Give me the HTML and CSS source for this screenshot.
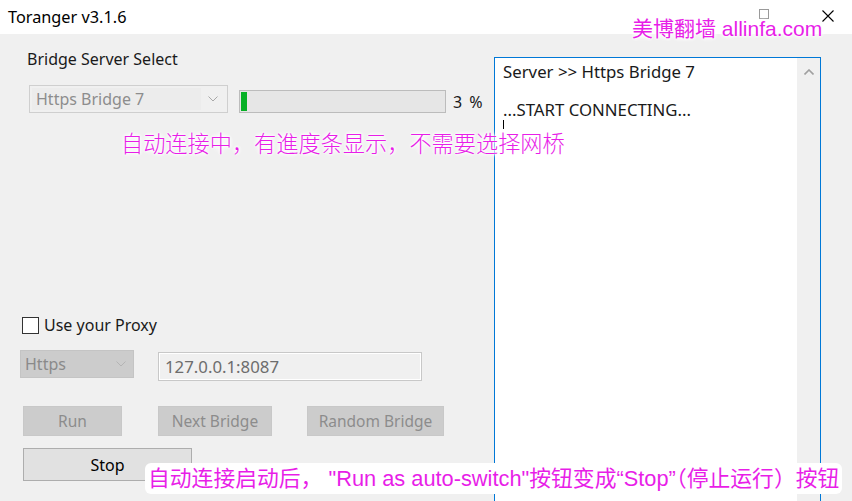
FILE: index.html
```html
<!DOCTYPE html>
<html>
<head>
<meta charset="utf-8">
<link rel="stylesheet" href="styles.css">
</head>
<body>
<div class="window">
  <div class="titlebar">
    <span class="title">Toranger v3.1.6</span>
    <span class="tb-spacer"></span>
    <span class="tb-max"></span>
    <svg class="tb-close" width="12" height="12" viewBox="0 0 12 12"><path d="M0.5 0.5 L11.5 11.5 M11.5 0.5 L0.5 11.5" stroke="#000" stroke-width="1.1"/></svg>
  </div>
  <div class="main">
    <div class="left">
      <div class="label">Bridge Server Select</div>
      <div class="row1">
        <div class="combo">
          <span class="combo-text">Https Bridge 7</span>
          <span class="combo-btn"><svg width="10" height="6" viewBox="0 0 10 6"><path d="M0.5 0.5 L5 5 L9.5 0.5" fill="none" stroke="#a8a8a8" stroke-width="1"/></svg></span>
        </div>
        <div class="progress"><div class="progress-fill" style="width:6px"></div></div>
        <span class="pct">3 %</span>
      </div>
      <div class="check-row">
        <span class="checkbox"></span>
        <span class="check-label">Use your Proxy</span>
      </div>
      <div class="proxy-row">
        <div class="combo2">
          <span class="combo2-text">Https</span>
          <svg width="10" height="6" viewBox="0 0 10 6"><path d="M0.5 0.5 L5 5 L9.5 0.5" fill="none" stroke="#b4b4b4" stroke-width="1"/></svg>
        </div>
        <div class="input">127.0.0.1:8087</div>
      </div>
      <div class="btn-row">
        <div class="btn dis btn-run">Run</div>
        <div class="btn dis btn-next">Next Bridge</div>
        <div class="btn dis btn-rand">Random Bridge</div>
      </div>
      <div class="btn btn-stop">Stop</div>
    </div>
    <div class="log">
      <div class="log-text">
        <div class="log-line">Server &gt;&gt; Https Bridge 7</div>
        <div class="log-line">&nbsp;</div>
        <div class="log-line">...START CONNECTING...</div>
        <div class="caret"></div>
      </div>
      <div class="scrollbar">
        <svg width="10" height="6" viewBox="0 0 10 6"><path d="M0.5 5.5 L5 1 L9.5 5.5" fill="none" stroke="#a0a0a0" stroke-width="1.6"/></svg>
      </div>
    </div>
  </div>
  <div class="note note-wm">美博翻墙 allinfa.com</div>
  <div class="note note-mid">自动连接中，有進度条显示，不需要选择网桥</div>
  <div class="note note-bottom">自动连接启动后，&nbsp;"Run as auto-switch"按钮变成“Stop”（停止运行）按钮</div>
</div>
</body>
</html>
```

FILE: styles.css
```css
* { box-sizing: border-box; }
html, body { margin: 0; padding: 0; }
body {
  width: 852px;
  height: 501px;
  overflow: hidden;
  background: #f0f0f0;
  font-family: "Noto Sans", "Open Sans", sans-serif;
  color: #1a1a1a;
}
.window { position: relative; width: 852px; height: 501px; }
.titlebar {
  height: 34px;
  background: #fff;
  display: flex;
  align-items: center;
  padding-left: 8px;
}
.title { font-size: 16.3px; color: #000; }
.tb-spacer { flex: 1; }
.tb-max {
  width: 10px; height: 10px;
  border: 1px solid #9a9a9a;
  margin-right: 53px;
  margin-top: -6px;
}
.tb-close { margin-right: 18px; margin-top: -2px; }

.main { display: flex; height: 467px; }
.left { width: 494px; display: flex; flex-direction: column; }
.label { font-size: 16px; margin: 15px 0 0 27px; line-height: 20px; height: 20px; }
.row1 { display: flex; align-items: flex-end; margin: 16px 0 0 29px; height: 28px; }
.combo {
  width: 199px; height: 28px;
  border: 1px solid #cfcfcf;
  background: #f0f0f0;
  display: flex; align-items: center;
  padding: 2px;
}
.combo-text {
  flex: 1; height: 22px; background: #ececec;
  color: #8d8d8d; font-size: 16px; line-height: 22px; padding-left: 4px;
}
.combo-btn { width: 24px; display: flex; justify-content: center; }
.progress {
  width: 207px; height: 23px; margin-left: 11px;
  border: 1px solid #bcbcbc; background: #e6e6e6;
  padding: 1px;
}
.progress-fill { height: 100%; background: #06b025; }
.pct { font-size: 16px; margin-left: 7px; line-height: 22px; word-spacing: 3px; }

.check-row { display: flex; align-items: center; margin: 204px 0 0 22px; height: 17px; }
.checkbox { width: 17px; height: 17px; border: 1px solid #333; background: #fff; }
.check-label { font-size: 16px; margin-left: 5px; line-height: 17px; }

.proxy-row { display: flex; align-items: flex-start; margin: 16px 0 0 20px; height: 31px; }
.combo2 {
  width: 114px; height: 28px; background: #cccccc;
  border: 1px solid #c4c4c4;
  display: flex; align-items: center; justify-content: space-between;
  padding: 0 7px 0 4px;
}
.combo2-text { color: #8a8a8a; font-size: 16px; }
.input {
  width: 264px; height: 29px; margin: 2px 0 0 24px;
  border: 1px solid #c8c8c8; background: #f0f0f0;
  box-shadow: inset 0 0 0 1px #fff;
  font-size: 16.8px; line-height: 27px; padding-left: 6px; color: #6d6d6d;
}

.btn-row { display: flex; margin: 25px 0 0 23px; height: 30px; }
.btn {
  height: 30px; display: flex; align-items: center; justify-content: center;
  font-size: 15.5px;
}
.dis { background: #cccccc; color: #8c8c8c; border: 1px solid #c8c8c8; }
.btn-run { width: 99px; }
.btn-next { width: 114px; margin-left: 36px; }
.btn-rand { width: 137px; margin-left: 35px; }
.btn-stop {
  width: 169px; height: 33px; margin: 12px 0 0 23px;
  background: #e1e1e1; border: 1px solid #adadad; color: #000;
  font-size: 16px;
}

.log {
  width: 327px; height: 460px; margin-top: 23px;
  border: 1px solid #0078d7; background: #fff;
  display: flex;
}
.log-text { flex: 1; padding: 4px 0 0 8px; font-size: 16.8px; }
.log-line { line-height: 19px; height: 19px; white-space: nowrap; }
.caret { width: 1px; height: 9px; background: #000; margin-top: 1px; }
.scrollbar {
  width: 23px; background: #f0f0f0;
  display: flex; justify-content: center; align-items: flex-start;
  padding-top: 11px;
}

.note {
  position: absolute;
  color: #e81ee8;
  font-family: "Liberation Sans", "Noto Sans CJK SC", sans-serif;
  white-space: nowrap;
  text-shadow: 0 0 2px #fff, 0 0 3px #fff, 0 0 4px #fff, 0 0 5px #fff, 0 0 6px #fff;
}
.note-wm { left: 632px; top: 16px; font-size: 21px; line-height: 26px; }
.note-mid { left: 121px; top: 132px; font-size: 22.2px; line-height: 26px; font-weight: 300; }
.note-bottom {
  left: 145px; top: 463px; font-size: 21.8px; line-height: 31px;
  background: #fff; padding: 0 3px; border-radius: 6px;
}
```
